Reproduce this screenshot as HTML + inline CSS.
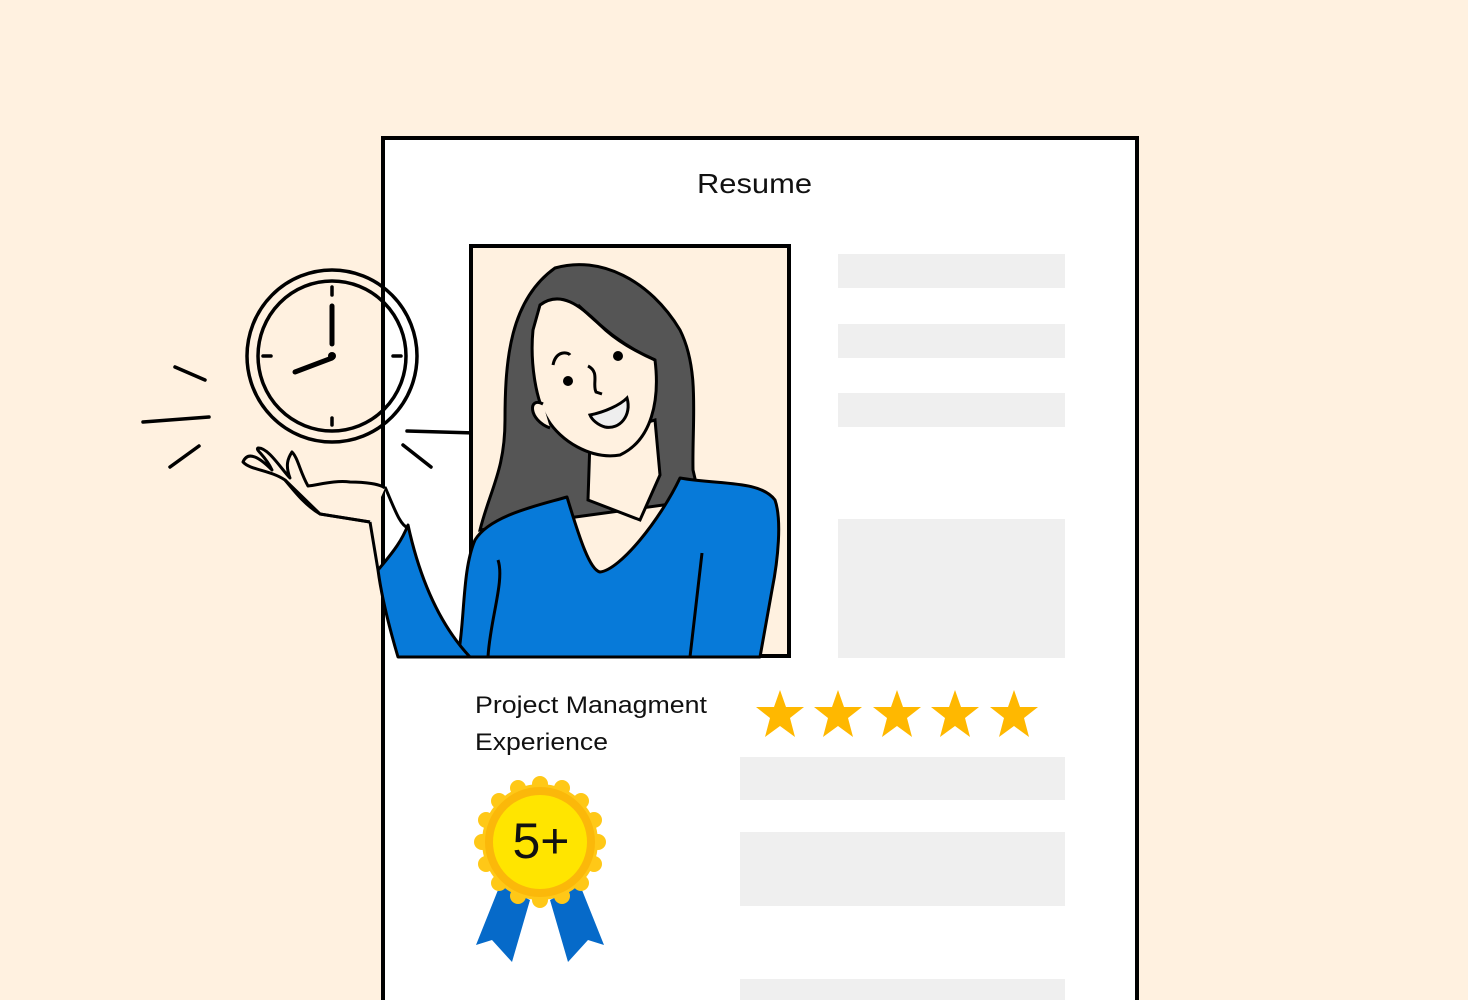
<!DOCTYPE html>
<html><head><meta charset="utf-8"><style>
html,body{margin:0;padding:0;width:1468px;height:1000px;overflow:hidden;background:#fff1e0}
svg{display:block}
text{font-family:"Liberation Sans",sans-serif;fill:#111}
</style></head><body>
<svg width="1468" height="1000" viewBox="0 0 1468 1000" xmlns="http://www.w3.org/2000/svg">
<rect width="1468" height="1000" fill="#fff1e0"/>
<rect x="383" y="138" width="754" height="880" fill="#fff" stroke="#000" stroke-width="4"/>
<text x="697" y="193" font-size="28" textLength="115" lengthAdjust="spacingAndGlyphs">Resume</text>
<g fill="#efefef">
<rect x="838" y="254" width="227" height="34"/>
<rect x="838" y="324" width="227" height="34"/>
<rect x="838" y="393" width="227" height="34"/>
<rect x="838" y="519" width="227" height="139"/>
<rect x="740" y="757" width="325" height="43"/>
<rect x="740" y="832" width="325" height="74"/>
<rect x="740" y="979" width="325" height="30"/>
</g>
<g fill="none" stroke="#000" stroke-width="3.5" stroke-linecap="round">
<ellipse cx="332" cy="356" rx="85" ry="86"/>
<ellipse cx="332" cy="356" rx="74" ry="75"/>
<line x1="332" y1="306" x2="332" y2="344" stroke-width="5"/>
<line x1="332" y1="358" x2="295" y2="372" stroke-width="5"/>
<line x1="332" y1="287" x2="332" y2="295"/>
<line x1="332" y1="418" x2="332" y2="425"/>
<line x1="263" y1="356" x2="271" y2="356"/>
<line x1="393" y1="356" x2="401" y2="356"/>
<line x1="175" y1="367" x2="205" y2="380"/>
<line x1="143" y1="422" x2="209" y2="417"/>
<line x1="170" y1="467" x2="199" y2="446"/>
<line x1="403" y1="445" x2="431" y2="467"/>
<line x1="407" y1="431" x2="475" y2="433"/>
</g>
<circle cx="332" cy="356" r="4" fill="#000"/>
<rect x="471" y="246" width="318" height="410" fill="#fff1e0" stroke="#000" stroke-width="4"/>
<path d="M555 268 C600 255 650 280 680 330 C700 370 692 420 693 470 L700 500 L480 530 C490 490 505 470 505 420 C505 360 510 300 555 268 Z" fill="#555" stroke="#000" stroke-width="3"/>
<path d="M590 440 L588 500 L640 520 L660 475 L655 420 Z" fill="#fff1e0" stroke="#000" stroke-width="3"/>
<path d="M540 305 C560 290 580 305 600 325 C620 345 645 355 655 360 C660 400 652 440 620 455 C590 460 560 440 548 420 C535 400 530 360 533 330 Z" fill="#fff1e0" stroke="#000" stroke-width="3"/>
<path d="M543 404 C528 396 528 420 550 428" fill="#fff1e0" stroke="#000" stroke-width="3"/>
<path d="M578 305 C600 325 620 345 655 360" fill="none" stroke="#000" stroke-width="3"/>
<circle cx="568" cy="381" r="5" fill="#000"/><circle cx="618" cy="356" r="5" fill="#000"/>
<path d="M553 365 C556 350 568 352 570 355" fill="none" stroke="#000" stroke-width="3"/>
<path d="M588 366 C600 372 592 384 596 392 L602 394" fill="none" stroke="#000" stroke-width="3"/>
<path d="M590 415 C605 412 620 405 627 398 C632 415 620 430 605 427 C598 425 592 420 590 415 Z" fill="#eee" stroke="#000" stroke-width="3"/>
<path d="M475 540 C490 515 540 505 567 497 C580 540 590 570 600 572 C620 570 660 520 680 478 C720 485 760 480 775 500 C782 520 778 560 772 590 L760 657 L458 657 C465 620 462 570 475 540 Z" fill="#077ad9" stroke="#000" stroke-width="3" stroke-linejoin="round"/>
<path d="M498 560 C505 580 490 620 488 657 M702 553 L690 657" fill="none" stroke="#000" stroke-width="3"/>
<path d="M378 570 C395 550 402 540 408 525 C420 580 440 625 470 657 L398 657 C390 630 382 600 378 570 Z" fill="#077ad9" stroke="#000" stroke-width="3" stroke-linejoin="round"/>
<path d="M378 570 L370 522 M385 487 C395 510 400 525 408 528" fill="none" stroke="#000" stroke-width="3"/>
<path d="M370 522 L320 514 C305 505 295 492 285 480 C270 470 250 470 243 462 C248 450 260 458 272 470 C265 455 255 450 258 448 C268 447 282 470 290 478 C285 465 288 458 292 452 C298 458 300 472 308 486 C318 485 335 480 350 482 C365 482 380 484 385 488" fill="#fff1e0" stroke="#000" stroke-width="3" stroke-linejoin="round"/>
<path d="M370 522 L320 514 L285 480" fill="none" stroke="#000" stroke-width="3"/>
<text x="475" y="713" font-size="24" textLength="232" lengthAdjust="spacingAndGlyphs">Project Managment</text>
<text x="475" y="750" font-size="24" textLength="133" lengthAdjust="spacingAndGlyphs">Experience</text>
<g fill="#ffb800">
<path id="st" d="M780 690 L786 707 L804 707 L790 718 L795 737 L780 726 L765 737 L770 718 L756 707 L774 707 Z"/>
<use href="#st" x="58"/><use href="#st" x="117"/><use href="#st" x="175"/><use href="#st" x="234"/>
</g>
<path d="M500 885 L476 945 L492 940 L512 962 L530 900 Z" fill="#066ac9"/>
<path d="M580 885 L604 945 L588 940 L568 962 L550 900 Z" fill="#066ac9"/>
<g fill="#ffc817">
<circle cx="540" cy="842" r="58"/>
<circle cx="540" cy="784" r="8"/><circle cx="562" cy="788" r="8"/><circle cx="581" cy="801" r="8"/><circle cx="594" cy="820" r="8"/>
<circle cx="598" cy="842" r="8"/><circle cx="594" cy="864" r="8"/><circle cx="581" cy="883" r="8"/><circle cx="562" cy="896" r="8"/>
<circle cx="540" cy="900" r="8"/><circle cx="518" cy="896" r="8"/><circle cx="499" cy="883" r="8"/><circle cx="486" cy="864" r="8"/>
<circle cx="482" cy="842" r="8"/><circle cx="486" cy="820" r="8"/><circle cx="499" cy="801" r="8"/><circle cx="518" cy="788" r="8"/>
</g>
<circle cx="540" cy="842" r="55" fill="#fbb80a"/>
<circle cx="540" cy="842" r="47" fill="#ffe500"/>
<text x="541" y="858" font-size="50" text-anchor="middle">5+</text>
</svg>
</body></html>
